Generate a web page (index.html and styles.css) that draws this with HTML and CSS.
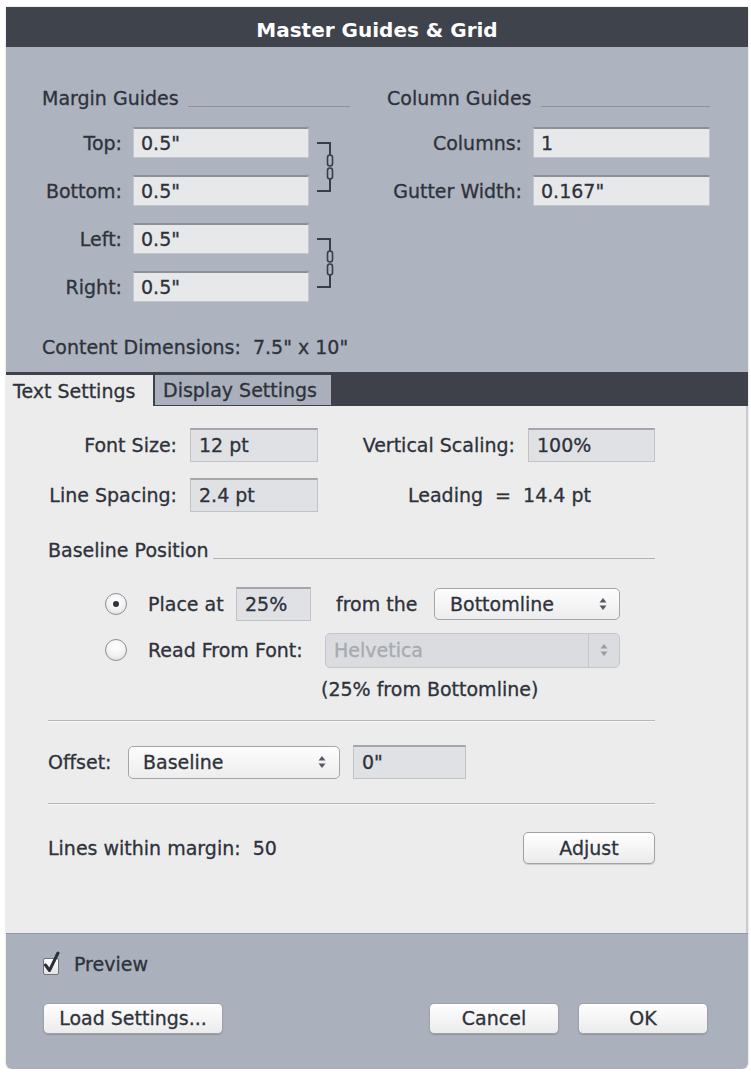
FILE: index.html
```html
<!DOCTYPE html>
<html>
<head>
<meta charset="utf-8">
<title>Master Guides &amp; Grid</title>
<link rel="stylesheet" href="styles.css">
</head>
<body>
<div class="dialog">
  <div class="titlebar">Master Guides &amp; Grid</div>

  <div class="upper">
    <div class="guides">
      <div class="col-left">
        <div class="sec-head"><span>Margin Guides</span><span class="rule"></span></div>
        <div class="margin-grid">
          <span class="lbl">Top:</span><div class="ufield">0.5"</div>
          <div class="chain chain-a">
            <svg width="20" height="52" viewBox="0 0 20 52"><path d="M1 2 H14 V14 M14 38 V50 H1" fill="none" stroke="#3a3e47" stroke-width="2"/><rect x="11.5" y="14" width="5" height="11" rx="2.5" fill="none" stroke="#3a3e47" stroke-width="1.6"/><rect x="11.5" y="27" width="5" height="11" rx="2.5" fill="none" stroke="#3a3e47" stroke-width="1.6"/></svg>
          </div>
          <span class="lbl">Bottom:</span><div class="ufield">0.5"</div>
          <span class="lbl">Left:</span><div class="ufield">0.5"</div>
          <div class="chain chain-b">
            <svg width="20" height="52" viewBox="0 0 20 52"><path d="M1 2 H14 V14 M14 38 V50 H1" fill="none" stroke="#3a3e47" stroke-width="2"/><rect x="11.5" y="14" width="5" height="11" rx="2.5" fill="none" stroke="#3a3e47" stroke-width="1.6"/><rect x="11.5" y="27" width="5" height="11" rx="2.5" fill="none" stroke="#3a3e47" stroke-width="1.6"/></svg>
          </div>
          <span class="lbl">Right:</span><div class="ufield">0.5"</div>
        </div>
      </div>
      <div class="col-right">
        <div class="sec-head"><span>Column Guides</span><span class="rule"></span></div>
        <div class="column-grid">
          <span class="lbl">Columns:</span><div class="ufield">1</div>
          <span class="lbl">Gutter Width:</span><div class="ufield">0.167"</div>
        </div>
      </div>
    </div>
    <div class="content-dim">Content Dimensions:&nbsp; 7.5" x 10"</div>
  </div>

  <div class="tabs">
    <div class="tab active">Text Settings</div>
    <div class="tab inactive">Display Settings</div>
  </div>

  <div class="lower">
    <div class="fields-grid">
      <span class="lbl">Font Size:</span><div class="lfield">12 pt</div>
      <span class="lbl">Vertical Scaling:</span><div class="lfield">100%</div>
      <span class="lbl">Line Spacing:</span><div class="lfield">2.4 pt</div>
      <span class="leading">Leading&nbsp; = &nbsp;14.4 pt</span>
    </div>

    <div class="sec-head base-head"><span>Baseline Position</span><span class="rule"></span></div>

    <div class="radio-row first">
      <span class="radio on"></span>
      <span class="rlabel place">Place at</span>
      <div class="lfield pct">25%</div>
      <span class="rlabel fromthe">from the</span>
      <div class="select sel-bottom"><span>Bottomline</span>
        <svg class="arr" width="8" height="14" viewBox="0 0 8 14"><polygon points="4,1 7.5,5.5 0.5,5.5" fill="#555a62"/><polygon points="0.5,8.5 7.5,8.5 4,13" fill="#555a62"/></svg>
      </div>
    </div>
    <div class="radio-row second">
      <span class="radio"></span>
      <span class="rlabel readfont">Read From Font:</span>
      <div class="select disabled"><span class="dis-text">Helvetica</span>
        <span class="dis-arrow"><svg width="8" height="14" viewBox="0 0 8 14"><polygon points="4,1 7.5,5.5 0.5,5.5" fill="#9a9ea4"/><polygon points="0.5,8.5 7.5,8.5 4,13" fill="#9a9ea4"/></svg></span>
      </div>
    </div>
    <div class="note">(25% from Bottomline)</div>

    <div class="sep sep1"></div>

    <div class="offset-row">
      <span class="olabel">Offset:</span>
      <div class="select sel-offset"><span>Baseline</span>
        <svg class="arr" width="8" height="14" viewBox="0 0 8 14"><polygon points="4,1 7.5,5.5 0.5,5.5" fill="#555a62"/><polygon points="0.5,8.5 7.5,8.5 4,13" fill="#555a62"/></svg>
      </div>
      <div class="lfield off-field">0"</div>
    </div>

    <div class="sep sep2"></div>

    <div class="lines-row">
      <span>Lines within margin:&nbsp; 50</span>
      <div class="btn adjust">Adjust</div>
    </div>
  </div>

  <div class="footer">
    <div class="check-row">
      <span class="checkbox">
        <svg width="20" height="24" viewBox="0 0 20 24"><path d="M3.5 14 L7.5 19.5 L16 2" fill="none" stroke="#2b2f37" stroke-width="3" stroke-linecap="round" stroke-linejoin="round"/></svg>
      </span>
      <span class="check-label">Preview</span>
    </div>
    <div class="button-row">
      <div class="btn load">Load Settings...</div>
      <div class="spacer"></div>
      <div class="btn cancel">Cancel</div>
      <div class="btn ok">OK</div>
    </div>
  </div>
</div>
</body>
</html>
```

FILE: styles.css
```css
body {
  margin: 0;
  background: #ffffff;
  font-family: "DejaVu Sans", "Noto Sans", sans-serif;
  font-size: 19px;
  color: #2e323b;
}

.dialog {
  margin: 7px 0 0 6px;
  width: 742px;
  height: 1062px;
  display: flex;
  flex-direction: column;
  border-radius: 0 0 6px 6px;
  overflow: hidden;
  box-shadow: 0 0 2px rgba(0, 0, 0, 0.25);
  -webkit-text-stroke: 0.3px currentColor;
}

.titlebar {
  height: 40px;
  flex: none;
  background: #3f434c;
  color: #ffffff;
  font-weight: bold;
  font-size: 20px;
  text-align: center;
  line-height: 46px;
  box-sizing: border-box;
  -webkit-text-stroke: 0;
}

/* ---------- upper ---------- */
.upper {
  height: 325px;
  flex: none;
  background: #adb3bf;
  box-sizing: border-box;
  padding: 40px 0 0 36px;
}

.guides {
  display: flex;
  gap: 37px;
}

.col-left { width: 308px; }
.col-right { width: 323px; }

.sec-head {
  display: flex;
  align-items: flex-end;
  height: 22px;
  line-height: 22px;
  white-space: nowrap;
}

.sec-head .rule {
  flex: 1;
  height: 1px;
  background: #8c919a;
  margin: 0 0 2px 9px;
}

.lbl {
  text-align: right;
  white-space: nowrap;
}

.margin-grid {
  margin-top: 18px;
  display: grid;
  grid-template-columns: 80px 176px 24px;
  grid-auto-rows: 31px;
  column-gap: 11px;
  row-gap: 17px;
  align-items: center;
}

.column-grid {
  margin-top: 18px;
  display: grid;
  grid-template-columns: 135px 177px;
  grid-auto-rows: 31px;
  column-gap: 11px;
  row-gap: 17px;
  align-items: center;
}

.ufield {
  height: 31px;
  box-sizing: border-box;
  background: #e7e8ea;
  border: 1px solid #c3c6cc;
  border-top: 2px solid #8b9099;
  padding-left: 7px;
  line-height: 28px;
}

.chain {
  grid-column: 3;
  margin-left: -4px;
  height: 52px;
  align-self: center;
}

.chain-a { grid-row: 1 / span 2; }
.chain-b { grid-row: 3 / span 2; }

.chain svg { display: block; }

.content-dim {
  margin-top: 34px;
  line-height: 22px;
}

/* ---------- tabs ---------- */
.tabs {
  height: 34px;
  flex: none;
  background: #3e414a;
  display: flex;
  align-items: flex-end;
}

.tab {
  box-sizing: border-box;
  padding-left: 7px;
  white-space: nowrap;
}

.tab.active {
  width: 147px;
  height: 31px;
  line-height: 32px;
  background: #ececec;
}

.tab.inactive {
  width: 176px;
  height: 30px;
  line-height: 31px;
  margin: 0 0 1px 2px;
  background: #a9afbb;
  padding-left: 8px;
}

/* ---------- lower ---------- */
.lower {
  height: 527px;
  flex: none;
  background: #ececec;
  box-sizing: border-box;
  padding: 22px 0 0 42px;
  border-right: 2px solid #c9cbcf;
}

.fields-grid {
  display: grid;
  grid-template-columns: 142px 128px 210px 127px;
  grid-auto-rows: 34px;
  row-gap: 16px;
  align-items: center;
}

.fields-grid .lbl { padding-right: 13px; }

.lfield {
  height: 34px;
  box-sizing: border-box;
  background: #dfe1e4;
  border: 1px solid #c0c2c5;
  border-top: 2px solid #a3a6ab;
  padding-left: 8px;
  line-height: 31px;
}

.leading {
  grid-column: 3 / 5;
  padding-left: 90px;
  white-space: nowrap;
}

.base-head {
  width: 607px;
  margin-top: 27px;
}

.base-head .rule {
  margin-left: 4px;
  background: #b0b2b6;
}

.radio-row {
  display: flex;
  align-items: center;
  height: 34px;
  padding-left: 57px;
}

.radio-row.first { margin-top: 26px; }
.radio-row.second { margin-top: 12px; }

.radio {
  width: 22px;
  height: 22px;
  box-sizing: border-box;
  border-radius: 50%;
  border: 1px solid #8d8f93;
  background: radial-gradient(circle at 50% 35%, #ffffff 0%, #f2f2f2 55%, #d6d6d6 100%);
  display: flex;
  align-items: center;
  justify-content: center;
  flex: none;
}

.radio.on::after {
  content: "";
  width: 6px;
  height: 6px;
  border-radius: 50%;
  background: #2e323b;
}

.rlabel {
  white-space: nowrap;
  flex: none;
}

.place { width: 88px; margin-left: 21px; }
.pct { width: 75px; }
.fromthe { width: 98px; margin-left: 25px; }
.readfont { width: 177px; margin-left: 21px; }

.select {
  display: flex;
  align-items: center;
  justify-content: space-between;
  height: 32px;
  box-sizing: border-box;
  border: 1px solid #a4a6aa;
  border-radius: 5px;
  background: linear-gradient(#fdfdfd, #ededed);
  padding: 0 12px 0 15px;
  flex: none;
}

.select .arr { display: block; }

.sel-bottom { width: 186px; }

.select.disabled {
  width: 295px;
  height: 35px;
  padding: 0 0 0 8px;
  background: #dadcdf;
  border-color: #c4c6c9;
}

.dis-text { color: #a7aaaf; }

.dis-arrow {
  width: 30px;
  height: 100%;
  border-left: 1px solid #c4c6c9;
  display: flex;
  align-items: center;
  justify-content: center;
}

.note {
  margin: 11px 0 0 273px;
  line-height: 22px;
}

.sep {
  width: 607px;
  height: 0;
  border-top: 1px solid #b4b6b9;
  border-bottom: 1px solid #f8f8f8;
}

.sep1 { margin-top: 20px; }
.sep2 { margin-top: 24px; }

.offset-row {
  display: flex;
  align-items: center;
  height: 34px;
  margin-top: 23px;
}

.olabel { width: 80px; }

.sel-offset {
  width: 212px;
  height: 33px;
  padding-left: 14px;
  padding-right: 13px;
}

.off-field {
  width: 113px;
  margin-left: 13px;
}

.lines-row {
  width: 607px;
  display: flex;
  align-items: center;
  justify-content: space-between;
  margin-top: 27px;
  height: 32px;
}

.btn {
  box-sizing: border-box;
  height: 31px;
  border: 1px solid #9fa2a7;
  border-radius: 5px;
  background: linear-gradient(#ffffff, #ebebeb);
  text-align: center;
  line-height: 29px;
  box-shadow: 0 1px 1px rgba(0, 0, 0, 0.15);
  white-space: nowrap;
}

.adjust { width: 132px; height: 32px; line-height: 30px; }

/* ---------- footer ---------- */
.footer {
  flex: 1;
  background: #aab0bc;
  box-sizing: border-box;
  padding: 19px 0 0 37px;
  border-top: 1px solid #9196a0;
}

.check-row {
  display: flex;
  align-items: center;
  height: 22px;
}

.checkbox {
  width: 16px;
  height: 17px;
  box-sizing: border-box;
  border: 1px solid #6f737a;
  border-radius: 2px;
  background: linear-gradient(#ffffff, #e2e3e6);
  position: relative;
  flex: none;
  margin-top: 4px;
}

.checkbox svg {
  position: absolute;
  left: -2px;
  top: -8px;
}

.check-label { margin-left: 15px; }

.button-row {
  display: flex;
  width: 665px;
  margin-top: 28px;
}

.spacer { flex: 1; }

.load { width: 180px; }
.cancel { width: 130px; }
.ok { width: 130px; margin-left: 19px; }
```
